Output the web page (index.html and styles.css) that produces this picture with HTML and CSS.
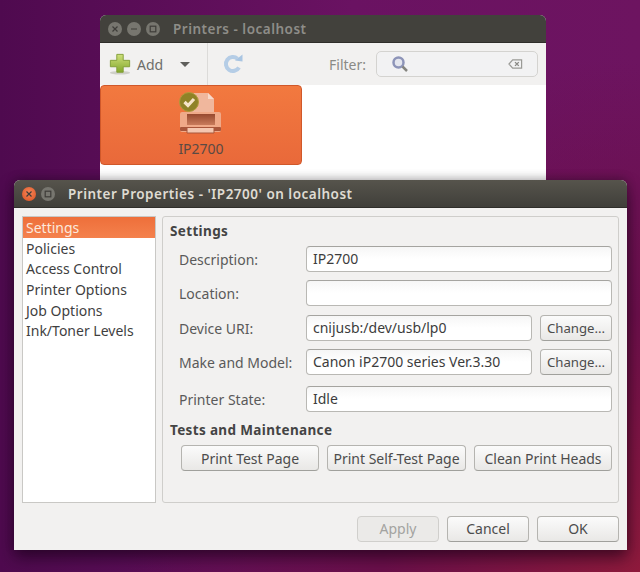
FILE: index.html
```html
<!DOCTYPE html>
<html lang="en">
<head>
<meta charset="utf-8">
<title>Printer Properties</title>
<link rel="stylesheet" href="styles.css">
</head>
<body>
<div class="desktop">
  <section class="window printers">
    <header class="titlebar dim">
      <div class="controls">
        <span class="ctl"><svg viewBox="0 0 14 14"><path d="M4.500 4.500l5 5m0-5l-5 5"/></svg></span>
        <span class="ctl"><svg viewBox="0 0 14 14"><path d="M4 7h6"/></svg></span>
        <span class="ctl"><svg viewBox="0 0 14 14"><rect x="4.200" y="4.200" width="5.600" height="5.600"/></svg></span>
      </div>
      <span class="title">Printers - localhost</span>
    </header>
    <div class="toolbar">
      <div class="tool-add">
        <svg class="plus" viewBox="0 0 24 24"><defs><linearGradient id="g" x1="0" y1="0" x2="0" y2="1"><stop offset="0" stop-color="#cfe07c"/><stop offset="1" stop-color="#83a82c"/></linearGradient></defs><ellipse cx="12" cy="21.500" rx="11" ry="2" fill="#cfcfc8"/><path d="M8.500 1.500h7v6.500h7v7h-7v6h-7v-6h-7v-7h7z" fill="url(#g)" stroke="#7f9c33" stroke-width="1"/></svg>
        <span class="add-label">Add</span>
        <span class="caret"></span>
      </div>
      <div class="tool-refresh">
        <svg class="refresh" viewBox="0 0 22 22"><path d="M17 14.500a7 7 0 1 1-1.500-8.800" fill="none" stroke="#b5cde6" stroke-width="4"/><path d="M13 7.500l7.500 1v-7z" fill="#a9c5e2"/></svg>
      </div>
      <span class="filter-label">Filter:</span>
      <div class="search">
        <svg class="lens" viewBox="0 0 18 18"><circle cx="7.500" cy="7.500" r="5" fill="#e4e6ee" stroke="#8d94b8" stroke-width="2.500"/><path d="M11.500 11.500l4.500 4.500" stroke="#85857f" stroke-width="2.500"/></svg>
        <svg class="clear" viewBox="0 0 16 12"><path d="M5 1.500h9.500v9H5L1 6z" fill="none" stroke="#9a9a96" stroke-width="1.300"/><path d="M7.500 4l4 4m0-4l-4 4" stroke="#8a8a86" stroke-width="1.500"/></svg>
      </div>
    </div>
    <div class="icon-view">
      <div class="printer-tile">
        <svg class="printer-icon" viewBox="0 0 46 44">
          <defs><linearGradient id="slot" x1="0" y1="0" x2="0" y2="1"><stop offset="0" stop-color="#96492f"/><stop offset="1" stop-color="#c87b5b"/></linearGradient></defs>
          <path d="M12 1h18l6 6v16H12z" fill="#f0b79d"/>
          <path d="M30 1l6 6h-6z" fill="#f8dacb"/>
          <rect x="2" y="20" width="41" height="20" rx="2" fill="#efa988"/>
          <rect x="9" y="22" width="28" height="11" fill="url(#slot)"/>
          <rect x="2" y="35" width="41" height="4" rx="1" fill="#a9563b"/>
          <path d="M9 36v5h27v-5" fill="#f4c7b0" stroke="#a9563b"/>
          <circle cx="11" cy="10" r="9.500" fill="#8f8227" stroke="#b09a3a"/>
          <path d="M6.500 10l3.500 3.500 6-6.500" fill="none" stroke="#f6e4c8" stroke-width="3.200"/>
        </svg>
        <span class="tile-label">IP2700</span>
      </div>
    </div>
  </section>

  <section class="window dialog">
    <header class="titlebar">
      <div class="controls">
        <span class="ctl close"><svg viewBox="0 0 14 14"><path d="M4.500 4.500l5 5m0-5l-5 5"/></svg></span>
        <span class="ctl"><svg viewBox="0 0 14 14"><rect x="4.200" y="4.200" width="5.600" height="5.600"/></svg></span>
      </div>
      <span class="title">Printer Properties - 'IP2700' on localhost</span>
    </header>
    <div class="dialog-body">
      <div class="panes">
        <ul class="sidebar">
          <li class="selected">Settings</li>
          <li>Policies</li>
          <li>Access Control</li>
          <li>Printer Options</li>
          <li>Job Options</li>
          <li>Ink/Toner Levels</li>
        </ul>
        <div class="settings">
          <h2 class="heading">Settings</h2>
          <div class="form">
            <div class="row"><span class="label">Description:</span><div class="entry">IP2700</div></div>
            <div class="row"><span class="label">Location:</span><div class="entry"></div></div>
            <div class="row row-uri"><span class="label">Device URI:</span><div class="entry">cnijusb:/dev/usb/lp0</div><button class="btn change">Change...</button></div>
            <div class="row"><span class="label">Make and Model:</span><div class="entry">Canon iP2700 series Ver.3.30</div><button class="btn change">Change...</button></div>
            <div class="row row-state"><span class="label">Printer State:</span><div class="entry">Idle</div></div>
          </div>
          <h2 class="heading heading-tests">Tests and Maintenance</h2>
          <div class="tests">
            <button class="btn test-a">Print Test Page</button>
            <button class="btn test-b">Print Self-Test Page</button>
            <button class="btn test-c">Clean Print Heads</button>
          </div>
        </div>
      </div>
      <div class="actions">
        <button class="btn action" disabled>Apply</button>
        <button class="btn action">Cancel</button>
        <button class="btn action">OK</button>
      </div>
    </div>
  </section>
</div>
</body>
</html>
```

FILE: styles.css
```css
* { box-sizing: border-box; }
html, body { margin: 0; padding: 0; }
body { width: 640px; height: 572px; overflow: hidden; font-family: "Noto Sans", "DejaVu Sans", sans-serif; font-size: 14px; color: #4c4c4c; }
.desktop { position: relative; width: 640px; height: 572px; overflow: hidden;
  background: radial-gradient(circle at 640px 572px, #8f1a3c 0, #6b0f4a 30%, transparent 60%), linear-gradient(90deg, #4f0a4f 0, #6a1262 55%, #6d1460 100%); }
.window { position: absolute; border-radius: 6px 6px 0 0; overflow: hidden; background: #f2f1f0; }
.printers { left: 100px; top: 15px; width: 446px; height: 175px; }
.dialog { left: 14px; top: 180px; width: 613px; height: 370px; box-shadow: 0 8px 16px rgba(20, 0, 20, .6), 0 -2px 10px rgba(0, 0, 0, .22); }

.titlebar { height: 28px; display: flex; align-items: center; padding-left: 8px; background: linear-gradient(#56544c, #403f3a); color: #dfdbd2; font-weight: 600; font-size: 13.500px; letter-spacing: .5px; border-bottom: 1px solid #2f2e2a; }
.titlebar.dim { background: #42413c; color: #8e8d88; }
.controls { display: flex; gap: 5px; margin-right: 13px; }
.ctl { width: 14px; height: 14px; border-radius: 50%; background: #77766f; display: block; }
.ctl svg { display: block; width: 14px; height: 14px; fill: none; stroke: #3e3d39; stroke-width: 1.200; }
.ctl.close { background: radial-gradient(circle at 50% 40%, #f6865a, #d9501f); }

.toolbar { height: 42px; display: flex; align-items: center; background: #f2f1f0; font-size: 14px; color: #6e6e6a; }
.tool-add { flex: none; display: flex; align-items: center; width: 108px; height: 100%; border-right: 1px solid #dcdbd9; padding-left: 9px; }
.plus { width: 22px; height: 22px; }
.add-label { margin-left: 6px; }
.caret { margin-left: 17px; width: 0; height: 0; border: 5px solid transparent; border-top: 5px solid #5f5f5b; border-bottom: 0; }
.tool-refresh { flex: none; width: 52px; padding-left: 14px; display: flex; }
.refresh { width: 22px; height: 22px; }
.filter-label { margin-left: 69px; color: #8a8a86; }
.search { flex: none; margin-left: 10px; width: 162px; height: 26px; display: flex; align-items: center; justify-content: space-between; padding: 0 14px; background: #f2f2f3; border: 1px solid #d4d3d0; border-radius: 5px; }
.lens { width: 18px; height: 18px; }
.clear { width: 15px; height: 12px; }

.icon-view { height: 105px; background: #fff; }
.printer-tile { width: 202px; height: 80px; display: flex; flex-direction: column; align-items: center; padding-top: 6px; border-radius: 4px; border: 1px solid #d0582a; background: linear-gradient(#f2793f, #e9693a); }
.printer-icon { width: 46px; height: 44px; }
.tile-label { margin-top: 5px; font-size: 14px; line-height: 16px; color: #5a4a44; }

.dialog-body { height: 342px; display: flex; flex-direction: column; padding: 8px; }
.panes { height: 287px; display: flex; gap: 6px; }
.sidebar { flex: none; width: 134px; margin: 0; padding: 0; list-style: none; background: #fff; border: 1px solid #c9c8c5; font-size: 14px; }
.sidebar li { height: 20.700px; line-height: 20.700px; padding: 1px 0 0 3px; color: #3f3f3f; }
.sidebar li.selected { color: #fce8dc; background: linear-gradient(#ee6f3a, #f4814d); }
.settings { flex: 1; min-width: 0; border: 1px solid #cfcecb; border-radius: 3px; padding: 5px 6px 0 7px; }
.heading { margin: 0; font-size: 13.500px; line-height: 18px; font-weight: 700; color: #444; letter-spacing: .35px; }
.form { display: flex; flex-direction: column; gap: 8px; margin-top: 6px; }
.row { display: flex; align-items: center; gap: 8px; padding-left: 9px; }
.row-uri { margin-top: 1px; }
.row-state { margin-top: 3px; }
.label { width: 119px; flex: none; color: #5a5a5a; }
.entry { flex: 1; min-width: 0; height: 26px; line-height: 24px; padding: 0 6px; background: linear-gradient(#f6f6f6, #fff 50%); border: 1px solid #b9b8b4; border-top-color: #a5a4a0; border-radius: 4px; color: #3c3c3c; white-space: nowrap; overflow: hidden; }
.btn { height: 26px; padding: 0; font: inherit; color: #4c4c4c; white-space: nowrap; background: linear-gradient(#fbfbfb, #e9e8e6); border: 1px solid #b5b4b0; border-bottom-color: #a0a09c; border-radius: 4px; }
.change { width: 72px; flex: none; font-size: 13.200px; }
.heading-tests { margin-top: 9px; }
.tests { display: flex; gap: 8px; margin-top: 6px; padding-left: 11px; }
.test-a { width: 138px; }
.test-b { width: 139px; }
.test-c { width: 138px; }
.actions { display: flex; justify-content: flex-end; gap: 8px; margin-top: 13px; }
.action { width: 82px; padding-bottom: 2px; }
.action:disabled { color: #a3a3a0; background: #ebeae8; border-color: #d0cfcc; }
```
